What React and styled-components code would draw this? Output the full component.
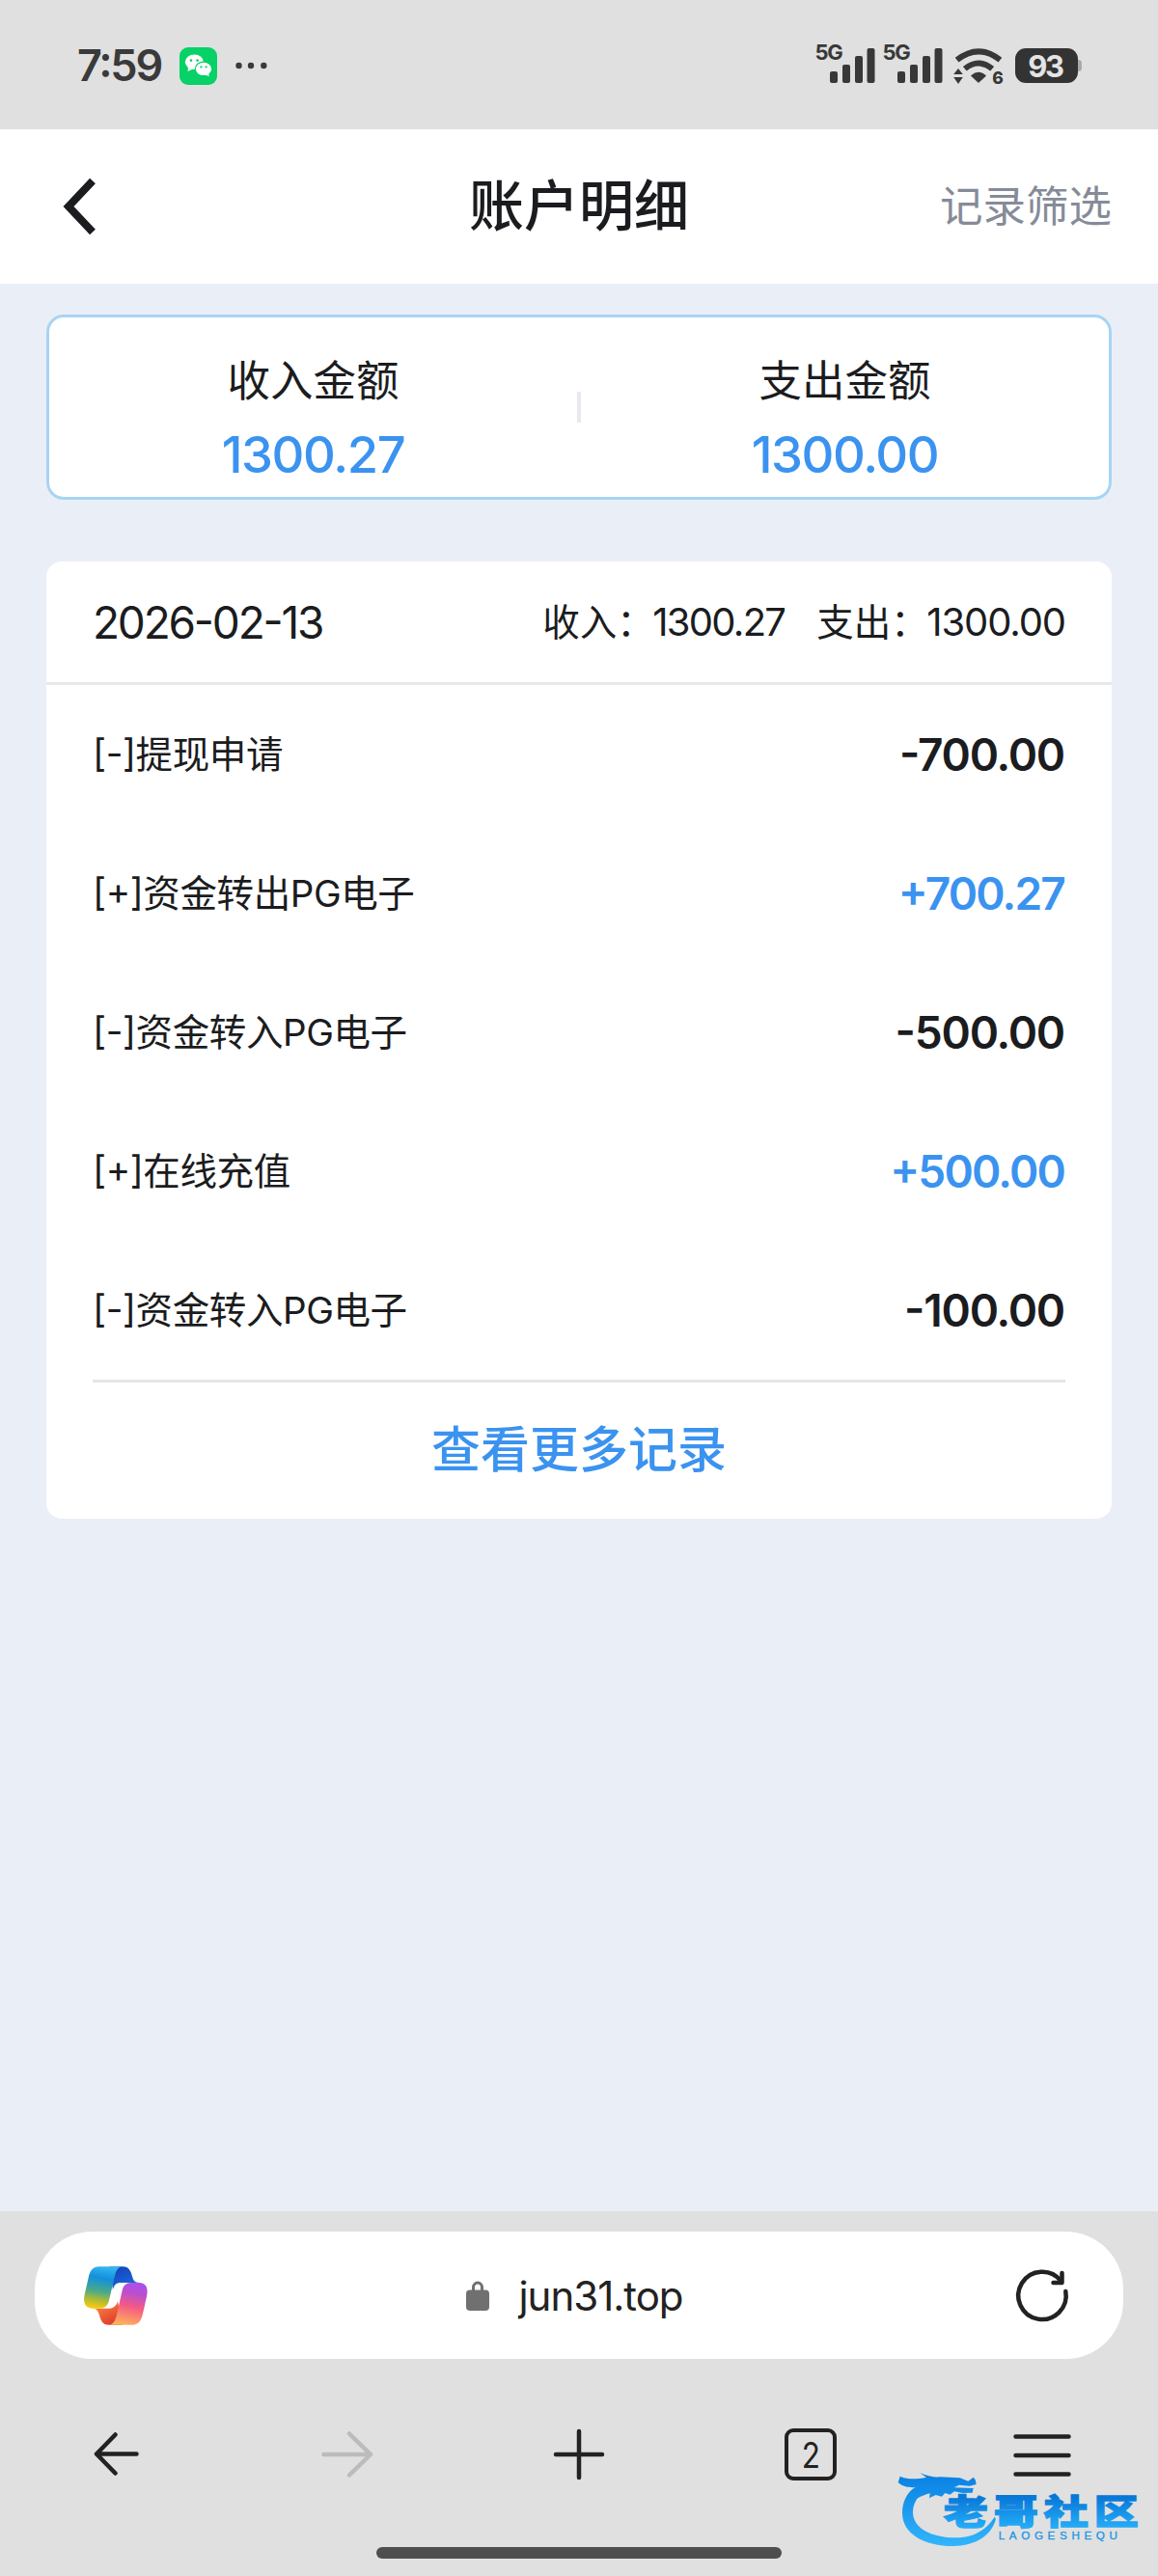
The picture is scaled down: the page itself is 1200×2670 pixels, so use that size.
import React from "react";
import styled, { createGlobalStyle } from "styled-components";

const GlobalStyle = createGlobalStyle`
  * { box-sizing: border-box; }
  html, body { margin: 0; padding: 0; }
  body {
    background: #eaeff7;
    font-family: Inter, "Noto Sans CJK SC", sans-serif;
    font-feature-settings: "case" 1;
    color: #1b1c20;
  }
`;

const Screen = styled.div`
  position: relative;
  width: 1200px;
  height: 2670px;
  display: flex;
  flex-direction: column;
  background: #eaeff7;
  overflow: hidden;
`;

const StatusBar = styled.header`
  height: 134px;
  flex: none;
  display: flex;
  justify-content: space-between;
  align-items: flex-start;
  padding: 42px 79px 0 80px;
  background: #e0e0e0;
`;

const StatusGroup = styled.div`
  display: flex;
  align-items: center;
  height: 52px;
`;

const Clock = styled.span`
  width: 106px;
  font-size: 45px;
  font-weight: 600;
  line-height: 52px;
  letter-spacing: -2.2px;
  color: #3a3a3a;
`;

const TitleBar = styled.nav`
  height: 160px;
  flex: none;
  display: grid;
  grid-template-columns: 1fr auto 1fr;
  align-items: center;
  padding: 0 48px;
  background: #fff;
`;

const Title = styled.h1`
  margin: 0;
  font-size: 57px;
  font-weight: 500;
  line-height: 80px;
  color: #1b1c20;
`;

const FilterLink = styled.span`
  justify-self: end;
  font-size: 44.5px;
  line-height: 64px;
  color: #868b98;
`;

const Content = styled.main`
  flex: 1;
  display: flex;
  flex-direction: column;
  gap: 64px;
  padding: 32px 48px 0;
`;

const Summary = styled.section`
  height: 192px;
  display: grid;
  grid-template-columns: 1fr 4px 1fr;
  align-items: center;
  border: 3px solid #a8d4f4;
  border-radius: 18px;
  background: #fff;
`;

const SummaryItem = styled.div`
  display: flex;
  flex-direction: column;
  align-items: center;
  padding-top: 27px;
`;

const SummaryLabel = styled.span`
  font-size: 44.5px;
  line-height: 70px;
`;

const SummaryValue = styled.span`
  font-size: 52.5px;
  font-weight: 450;
  line-height: 82px;
  color: #3b93f0;
  letter-spacing: -1.4px;
`;

const SummaryDivider = styled.i`
  height: 32px;
  background: #e8e8f0;
`;

const Ledger = styled.section`
  height: 992px;
  display: flex;
  flex-direction: column;
  border-radius: 16px;
  background: #fff;
`;

const LedgerHead = styled.div`
  height: 128px;
  display: flex;
  align-items: center;
  justify-content: space-between;
  padding: 0 48px;
  border-bottom: 3px solid #e8e8e8;
`;

const DateText = styled.span`
  font-size: 46px;
  letter-spacing: -2.2px;
`;

const Totals = styled.div`
  display: flex;
  gap: 33px;
  font-size: 38.5px;
  line-height: 56px;
`;

const Total = styled.span`
  display: flex;
  align-items: baseline;
  white-space: nowrap;
`;

const Caption = styled.span`
  width: 114px;
`;

const Digits = styled.span`
  font-size: 40px;
  letter-spacing: ${(p) => p.$track}px;
`;

const Rows = styled.div`
  display: flex;
  flex-direction: column;
  margin: 0 48px;
  border-bottom: 3px solid #e6e6e6;
`;

const Row = styled.div`
  height: 144px;
  display: flex;
  align-items: center;
  justify-content: space-between;
`;

const RowLabel = styled.span`
  font-size: 38.5px;
  line-height: 56px;
  letter-spacing: -0.4px;
`;

const Amount = styled.span`
  font-size: 46px;
  font-weight: 600;
  line-height: 56px;
  letter-spacing: ${(p) => (p.$positive ? "-1.8px" : "-1.2px")};
  margin-right: 1px;
  color: ${(p) => (p.$positive ? "#3b93f0" : "#1b1c20")};
`;

const MoreLink = styled.div`
  flex: 1;
  display: flex;
  align-items: center;
  justify-content: center;
  padding-bottom: 9px;
  font-size: 51px;
  font-weight: 500;
  color: #3b93f0;
`;

const BrowserChrome = styled.footer`
  height: 378px;
  flex: none;
  display: flex;
  flex-direction: column;
  padding-top: 21px;
  background: #e0e0e0;
`;

const AddressBar = styled.div`
  height: 132px;
  margin: 0 36px;
  padding: 0 57px 0 51px;
  display: flex;
  align-items: center;
  justify-content: space-between;
  border-radius: 60px;
  background: #fff;
`;

const Address = styled.div`
  display: flex;
  align-items: center;
  gap: 30px;
  margin-right: 15px;
  font-size: 42px;
  letter-spacing: -1px;
  color: #222;
`;

const Tools = styled.div`
  height: 198px;
  display: grid;
  grid-template-columns: repeat(5, 240px);
  align-items: center;
  justify-items: center;
`;

const TabCount = styled.div`
  width: 54px;
  height: 54px;
  display: flex;
  align-items: center;
  justify-content: center;
  border: 4.5px solid #222;
  border-radius: 9px;
  font-size: 37px;
  color: #222;
`;

const TabNumber = styled.span`
  transform: scaleX(0.85);
`;

const HomeIndicator = styled.div`
  width: 420px;
  height: 12px;
  margin: -3px auto 0;
  border-radius: 6px;
  background: #4e4e4e;
`;

const Watermark = styled.svg`
  position: absolute;
  right: 0;
  bottom: 0;
`;

const Icon = styled.svg`
  display: block;
  flex: none;
  overflow: visible;
`;

const BackIcon = styled(Icon)`
  margin-left: 16px;
`;

const NotificationIcons = () => (
  <Icon width="94" height="52" viewBox="186 42 94 52">
    <rect x="186" y="49" width="39" height="39" rx="9" fill="#07d167" />
    <g fill="#fff">
      <ellipse cx="201.4" cy="64.3" rx="9.5" ry="7.7" />
      <path d="M195 69l-.4 5 5.4-2.5z" />
    </g>
    <ellipse cx="211" cy="71.4" rx="9.2" ry="7.9" fill="#07d167" />
    <ellipse cx="211" cy="71.4" rx="8.1" ry="6.7" fill="#fff" />
    <path d="M212 77l4.6 2.2-.6-4z" fill="#fff" />
    <g fill="#07d167">
      <circle cx="198" cy="62.6" r="1.3" />
      <circle cx="204.6" cy="62.6" r="1.3" />
      <circle cx="208.4" cy="69.4" r="1.1" />
      <circle cx="213.6" cy="69.4" r="1.1" />
    </g>
    <g fill="#3a3a3a">
      <circle cx="247.5" cy="68" r="3.2" />
      <circle cx="260" cy="68" r="3.2" />
      <circle cx="273.3" cy="68" r="3.2" />
    </g>
  </Icon>
);

const SignalIcon = () => (
  <Icon width="70" height="52" viewBox="845 42 70 52" fill="#383838">
    <text x="844.5" y="62" fontFamily="Inter, sans-serif" fontSize="22" fontWeight="700" letterSpacing="-1.2">5G</text>
    <rect x="860" y="74" width="8" height="12" rx="2" />
    <rect x="873" y="67" width="8" height="19" rx="2" />
    <rect x="886" y="58" width="8" height="28" rx="2" />
    <rect x="898.5" y="50" width="8" height="36" rx="2" />
  </Icon>
);

const WifiIcon = () => (
  <Icon width="67" height="52" viewBox="985 42 67 52" fill="none">
    <path d="M991.6 62.2Q1014 44.5 1036.4 62.2" stroke="#383838" strokeWidth="6" />
    <path d="M999.8 71.3Q1014 59.7 1028.2 71.3" stroke="#383838" strokeWidth="6" />
    <path d="M1007 78.5q7-6 14 0l-7 6.5z" fill="#383838" stroke="#383838" strokeWidth="1.5" strokeLinejoin="round" />
    <path d="M993 71l4.8 6h-9.6zM993 87l4.8-7h-9.6z" fill="#383838" />
    <text x="1028.3" y="87" fontFamily="Inter, sans-serif" fontSize="17.5" fontWeight="800" fill="#383838">6</text>
  </Icon>
);

const BatteryIcon = () => (
  <Icon width="69" height="52" viewBox="1052 42 69 52">
    <path d="M1114 62h3.5a3.5 3.5 0 0 1 3.5 3.5v5a3.5 3.5 0 0 1-3.5 3.5H1114z" fill="#aaa" />
    <rect x="1052" y="50" width="65" height="36" rx="11" fill="#333" />
    <text x="1083" y="79.5" textAnchor="middle" fontFamily="Inter, sans-serif" fontSize="31" fontWeight="700" letterSpacing="-2.4" fill="#e4e4e4">93</text>
  </Icon>
);

const BackChevron = () => (
  <BackIcon width="36" height="60" viewBox="0 0 36 60" fill="none">
    <path d="M32 3.5L7 30l25 26.5" stroke="#1b1c20" strokeWidth="8" />
  </BackIcon>
);

const CopilotIcon = () => (
  <Icon width="66" height="61" viewBox="51 56 198 183">
    <defs>
      <linearGradient id="cool" x1=".55" y1="0" x2=".4" y2="1">
        <stop offset="0" stopColor="#35b7ef" />
        <stop offset=".28" stopColor="#1290dc" />
        <stop offset=".6" stopColor="#4ba987" />
        <stop offset=".83" stopColor="#b6bd30" />
        <stop offset="1" stopColor="#f7cb0e" />
      </linearGradient>
      <linearGradient id="warm" x1=".6" y1="0" x2=".4" y2="1">
        <stop offset="0" stopColor="#a951ec" />
        <stop offset=".25" stopColor="#bd4fcb" />
        <stop offset=".55" stopColor="#f45a83" />
        <stop offset="1" stopColor="#ffb15d" />
      </linearGradient>
      <linearGradient id="navy" x1=".2" y1="0" x2=".7" y2="1">
        <stop offset="0" stopColor="#1741b9" />
        <stop offset="1" stopColor="#196ee0" />
      </linearGradient>
      <linearGradient id="ember" x1="0" y1="0" x2=".7" y2="1">
        <stop offset="0" stopColor="#ff9146" />
        <stop offset="1" stopColor="#df392c" />
      </linearGradient>
    </defs>
    <path d="M130 57h42c19 0 25 15 29 30 4 14 8 20 22 20h-58c-14 0-20 7-24 22z" fill="url(#navy)" />
    <path d="M170 238h-42c-19 0-25-15-29-30-4-14-8-21-22-21h52c14 0 22-7 27-22z" fill="url(#ember)" />
    <path d="M98 57h73c-12 0-20 11-24 28l-18 77c-4 16-12 25-28 25H78c-22 0-31-16-25-43l12-53c5-22 14-34 33-34z" fill="url(#cool)" />
    <path d="M202 238h-73c12 0 19-11 23-28l18-79c4-16 12-24 28-24h24c22 0 30 16 24 43l-12 54c-5 22-14 34-32 34z" fill="url(#warm)" />
  </Icon>
);

const LockIcon = () => (
  <Icon width="24" height="31" viewBox="0 0 24 31">
    <rect y="9.5" width="24" height="21.5" rx="4" fill="#707070" />
    <path d="M7.5 11V7a4.5 5 0 0 1 9 0v4" fill="none" stroke="#707070" strokeWidth="3" />
  </Icon>
);

const ReloadIcon = () => (
  <Icon width="54" height="54" viewBox="0 0 54 54" fill="none" stroke="#222" strokeWidth="4.5" strokeLinecap="round" strokeLinejoin="round">
    <path d="M51.3 23A24.7 24.7 0 1 1 46.5 12.2" />
    <path d="M47.5 4v10H38.500" />
  </Icon>
);

const ToolIcon = ({ d, color = "#222" }) => (
  <Icon width="60" height="60" viewBox="0 0 60 60" fill="none" stroke={color} strokeWidth="4.5" strokeLinecap="round" strokeLinejoin="round">
    <path d={d} />
  </Icon>
);

const CommunityMark = () => (
  <Watermark width="300" height="130" viewBox="0 0 900 390">
    <defs>
      <linearGradient id="ring" gradientUnits="userSpaceOnUse" x1="0" y1="70" x2="0" y2="298">
        <stop offset="0" stopColor="#087fe3" />
        <stop offset="1" stopColor="#32b5fb" />
      </linearGradient>
      <linearGradient id="brand" gradientUnits="userSpaceOnUse" x1="0" y1="-85" x2="0" y2="10">
        <stop offset="0" stopColor="#0878d8" />
        <stop offset="1" stopColor="#25aef8" />
      </linearGradient>
    </defs>
    <path d="M218 99C145 92 105 137 105 194c0 66 71 103 157 103 67 0 120-31 134-84l-4-7c-27 42-66 65-121 65-73 0-133-29-133-79 0-38 27-70 80-93z" fill="url(#ring)" />
    <path d="M98 80c22 10 48 10 82 4l-20-15c22 10 45 15 64 13l60 3 26 10 16-12 6 8 3 14-21 5-32-3-16 8 60 2-3 14-31 1-25-5-14 10-15-5-10 11-19-5-20 10 2-15c-30 8-45 19-55 28l7-37 23-12c-30 4-55 5-74-13z" fill="url(#ring)" />
    <g transform="translate(233 231) scale(1.28 1)">
      <text fontFamily='"Noto Sans CJK SC", sans-serif' fontSize="108" fontWeight="900" letterSpacing="14" fill="url(#brand)" stroke="url(#brand)" strokeWidth="4">老哥社区</text>
    </g>
    <text x="404" y="275" textLength="370" fontFamily='"Liberation Sans", sans-serif' fontSize="35" fill="#2196e8" stroke="#2196e8" strokeWidth="1">LAOGESHEQU</text>
  </Watermark>
);

const records = [
  ["[-]提现申请", "-700.00"],
  ["[+]资金转出PG电子", "+700.27"],
  ["[-]资金转入PG电子", "-500.00"],
  ["[+]在线充值", "+500.00"],
  ["[-]资金转入PG电子", "-100.00"],
];

export default function App() {
  return (
    <Screen>
      <GlobalStyle />
      <StatusBar>
        <StatusGroup>
          <Clock>7:59</Clock>
          <NotificationIcons />
        </StatusGroup>
        <StatusGroup>
          <SignalIcon />
          <SignalIcon />
          <WifiIcon />
          <BatteryIcon />
        </StatusGroup>
      </StatusBar>
      <TitleBar>
        <BackChevron />
        <Title>账户明细</Title>
        <FilterLink>记录筛选</FilterLink>
      </TitleBar>
      <Content>
        <Summary>
          <SummaryItem>
            <SummaryLabel>收入金额</SummaryLabel>
            <SummaryValue>1300.27</SummaryValue>
          </SummaryItem>
          <SummaryDivider />
          <SummaryItem>
            <SummaryLabel>支出金额</SummaryLabel>
            <SummaryValue>1300.00</SummaryValue>
          </SummaryItem>
        </Summary>
        <Ledger>
          <LedgerHead>
            <DateText>2026-02-13</DateText>
            <Totals>
              <Total><Caption>收入：</Caption><Digits $track={-1.7}>1300.27</Digits></Total>
              <Total><Caption>支出：</Caption><Digits $track={-1.1}>1300.00</Digits></Total>
            </Totals>
          </LedgerHead>
          <Rows>
            {records.map(([label, amount], i) => (
              <Row key={i}>
                <RowLabel>{label}</RowLabel>
                <Amount $positive={amount.startsWith("+")}>{amount}</Amount>
              </Row>
            ))}
          </Rows>
          <MoreLink>查看更多记录</MoreLink>
        </Ledger>
      </Content>
      <BrowserChrome>
        <AddressBar>
          <CopilotIcon />
          <Address>
            <LockIcon />
            jun31.top
          </Address>
          <ReloadIcon />
        </AddressBar>
        <Tools>
          <ToolIcon d="M51.5 29.5H10M29.5 9.5L10 29.5L29.5 49.5" />
          <ToolIcon d="M5.5 30H54M32 8.5L54 30L32 51.5" color="#bcbcbc" />
          <ToolIcon d="M6 30H54M30 6V54" />
          <TabCount>
            <TabNumber>2</TabNumber>
          </TabCount>
          <ToolIcon d="M2.5 11.5H57.5M2.5 31H57.5M2.5 50.5H57.5" />
        </Tools>
        <HomeIndicator />
      </BrowserChrome>
      <CommunityMark />
    </Screen>
  );
}
